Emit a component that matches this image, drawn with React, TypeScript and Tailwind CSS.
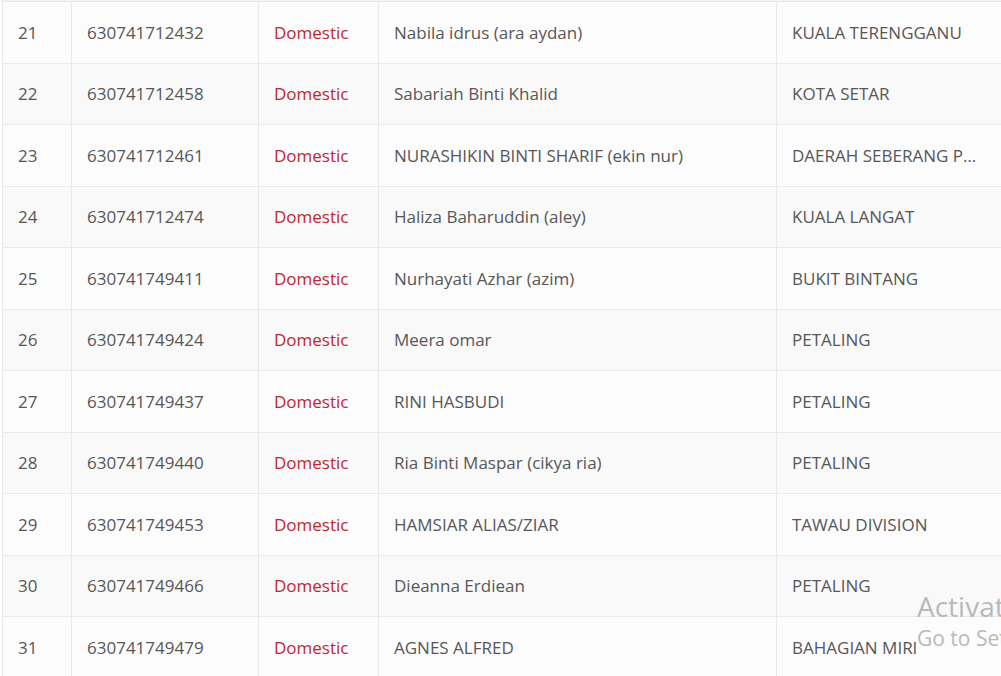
import React from 'react';

const rows = [
    { no: 21, id: '630741712432', name: 'Nabila idrus (ara aydan)', area: 'KUALA TERENGGANU' },
    { no: 22, id: '630741712458', name: 'Sabariah Binti Khalid', area: 'KOTA SETAR' },
    { no: 23, id: '630741712461', name: 'NURASHIKIN BINTI SHARIF (ekin nur)', area: 'DAERAH SEBERANG PERAI UTARA' },
    { no: 24, id: '630741712474', name: 'Haliza Baharuddin (aley)', area: 'KUALA LANGAT' },
    { no: 25, id: '630741749411', name: 'Nurhayati Azhar (azim)', area: 'BUKIT BINTANG' },
    { no: 26, id: '630741749424', name: 'Meera omar', area: 'PETALING' },
    { no: 27, id: '630741749437', name: 'RINI HASBUDI', area: 'PETALING' },
    { no: 28, id: '630741749440', name: 'Ria Binti Maspar (cikya ria)', area: 'PETALING' },
    { no: 29, id: '630741749453', name: 'HAMSIAR ALIAS/ZIAR', area: 'TAWAU DIVISION' },
    { no: 30, id: '630741749466', name: 'Dieanna Erdiean', area: 'PETALING' },
    { no: 31, id: '630741749479', name: 'AGNES ALFRED', area: 'BAHAGIAN MIRI' },
];

export default function App() {
    return (
        <div className="relative w-[1001px] h-[676px] overflow-hidden bg-white font-['Open_Sans',sans-serif] text-[17px] text-[#575757]">
            <div className="h-[1px] bg-[#f1f3f6]" />
            <table className="ml-[2px] w-[1012px] table-fixed border-collapse">
                <colgroup>
                    <col className="w-[69px]" />
                    <col className="w-[187px]" />
                    <col className="w-[120px]" />
                    <col className="w-[398px]" />
                    <col className="w-[238px]" />
                </colgroup>
                <tbody>
                    {rows.map((r, i) => (
                        <tr key={r.no} className={`h-[61.5px] border-y border-[#e9e9e9] ${i % 2 === 0 ? 'bg-[#fcfcfd]' : 'bg-[#f9f9f9]'}`}>
                            <td className="border-x border-[#e9e9e9] px-[15px]">{r.no}</td>
                            <td className="border-x border-[#e9e9e9] px-[15px]">{r.id}</td>
                            <td className="border-x border-[#e9e9e9] px-[15px] text-[#c1272d]">Domestic</td>
                            <td className="border-x border-[#e9e9e9] px-[15px]">{r.name}</td>
                            <td className="border-x border-[#e9e9e9] pl-[15px] pr-[33px]">
                                <div className="truncate">{r.area}</div>
                            </td>
                        </tr>
                    ))}
                </tbody>
            </table>

            {/* windows activation watermark */}
            <div className="absolute left-[917px] top-[592px] leading-none text-[#b9b9b9] whitespace-nowrap font-['Open_Sans',sans-serif]">
                <div className="text-[28px]">Activate Windows</div>
                <div className="mt-[8px] text-[21px]">Go to Settings to activate Windows.</div>
            </div>
        </div>
    );
}
